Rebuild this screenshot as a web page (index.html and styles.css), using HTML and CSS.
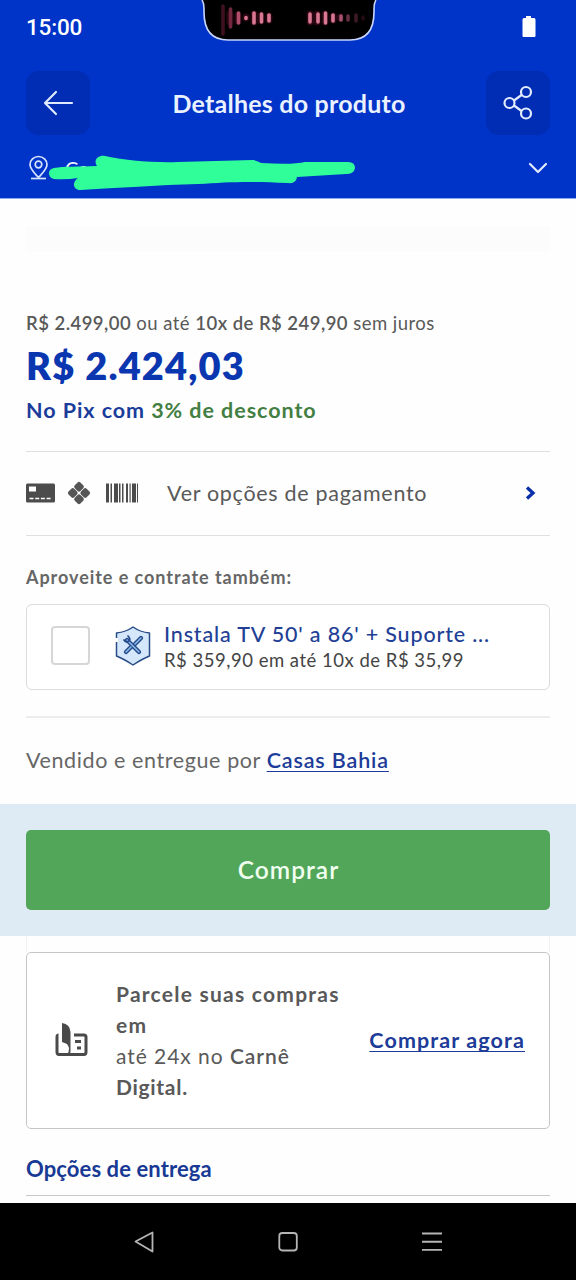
FILE: index.html
```html
<!DOCTYPE html>
<html lang="pt-BR">
<head>
<meta charset="utf-8">
<title>Detalhes do produto</title>
<link rel="stylesheet" href="styles.css">
</head>
<body>
<header class="top">
  <div class="status">
    <span class="clock">15:00</span>
    <svg class="notch" width="176" height="42" viewBox="0 0 176 42">
      <path d="M0 0Q3 2 3 9V12Q3 40 27 40H149Q173 40 173 12V9Q173 2 176 0Z" fill="#000"/>
      <path d="M1 0Q3 3 3 9V12Q3 40 27 40H149Q173 40 173 12V9Q173 3 175 0" fill="none" stroke="#c9d6ff" stroke-width="1.6"/>
      <g stroke-linecap="round" stroke-width="7" stroke="#8d1840" opacity=".3"><path d="M29 14V22M37 15V21M45 17V18M53 14V22M60 15V21M68 16V20M109 14V22M116 14V22M124 14V22M132 16V20M139 17V18"/></g>
      <g stroke-linecap="round" stroke-width="3.6" fill="none">
        <path d="M22 6V34" stroke="#3e1020"/><path d="M29.500 9V27" stroke="#71273e"/><path d="M37.500 13V23" stroke="#b14e6b"/><path d="M45 17.500V18.500M53 13V23M60.500 14V22M68 15V21M109 14V22M117 14V22M124.500 13V23M132 15V21" stroke="#d97893"/><path d="M140 16V20" stroke="#a6526c"/><path d="M147 16V20" stroke="#65303f"/><path d="M155 15V21" stroke="#3d1924"/><path d="M162 17V19" stroke="#230b13"/>
      </g>
    </svg>
    <svg class="battery" width="14" height="22" viewBox="0 0 14 22"><path d="M4 0H9V2H12Q13.500 2 13.500 3.500V20Q13.500 21 12.500 21H1.500Q.5 21 .5 20V3.500Q.5 2 2 2H4Z" fill="#fff"/></svg>
  </div>
  <div class="appbar">
    <div class="icon-btn"><svg width="32" height="28" viewBox="0 0 32 28" fill="none" stroke="#dfeaff" stroke-width="2.200" stroke-linecap="round" stroke-linejoin="round"><path d="M30 14H3M14 3L3 14L14 25"/></svg></div>
    <h1 class="title">Detalhes do produto</h1>
    <div class="icon-btn"><svg width="32" height="36" viewBox="0 0 32 36" fill="none" stroke="#e3ecff" stroke-width="2.200"><circle cx="7.500" cy="18" r="5"/><circle cx="24" cy="7" r="5"/><circle cx="24" cy="28.500" r="5"/><path d="M12 15.500L19.500 10M12 20.500L19.500 26"/></svg></div>
  </div>
  <div class="location">
    <svg width="20" height="26" viewBox="0 0 20 26" fill="none" stroke="#d7e4ff" stroke-width="1.700"><path d="M2 23.500H17"/><path d="M9.500 22.500C5 17.500 1 14 1 9.500A8.500 8 0 0 1 18 9.500C18 14 14 17.500 9.500 22.500Z"/><circle cx="9.500" cy="9.500" r="3.300"/></svg>
    <span class="place">Ca</span>
    <svg class="scribble" width="308" height="40" viewBox="0 0 308 40"><path d="M6 18C16 16 30 17 49 16C45 10 50 5 57 6C75 10 105 13 130 12L205 10Q210 11 213 13Q245 15 257 12L300 12Q307 12 307 18Q306 24 298 24L249 27Q248 34 240 33C200 31 180 32 150 34C110 35 70 38 32 40C26 40 23 33 30 28Q18 30 6 29Q1 28 1 23Q1 19 6 18Z" fill="#30ff99"/></svg>
    <svg class="chevron" width="20" height="12" viewBox="0 0 20 12" fill="none" stroke="#e3ecff" stroke-width="2.200" stroke-linecap="round" stroke-linejoin="round"><path d="M2 2L10 10L18 2"/></svg>
  </div>
</header>
<main>
  <section class="section">
    <div class="placeholder"></div>
    <p class="full-price"><b>R$ 2.499,00</b> ou até <b>10x de R$ 249,90</b> sem juros</p>
    <p class="price">R$ 2.424,03</p>
    <p class="pix">No Pix com <span class="off">3% de desconto</span></p>
    <div class="payment">
      <svg width="29" height="20" viewBox="0 0 29 20"><rect width="29" height="19" y=".5" rx="1.500" fill="#4c4c4c"/><path d="M3 3.500H10V8.500H3Z" fill="#fff"/><path d="M3.500 15.500H26" stroke="#fff" stroke-width="1.400" stroke-dasharray="4 1.700"/></svg>
      <svg class="pix-icon" width="24" height="24" viewBox="0 0 24 24"><g transform="rotate(45 12 12)" fill="#555"><rect x="3.600" y="3.600" width="8" height="8" rx="2"/><rect x="12.400" y="3.600" width="8" height="8" rx="2"/><rect x="3.600" y="12.400" width="8" height="8" rx="2"/><rect x="12.400" y="12.400" width="8" height="8" rx="2"/></g></svg>
      <svg class="bars" width="33" height="20" viewBox="0 0 33 20"><path d="M0 .5H3V19.500H0ZM4.500 .5H6V19.500H4.500ZM8 .5H12V19.500H8ZM13 .5H14.500V19.500H13ZM16 .5H17.500V19.500H16ZM20 .5H22V19.500H20ZM23.500 .5H24.700V19.500H23.500ZM26 .5H30V19.500H26ZM31 .5H32V19.500H31Z" fill="#4c4c4c"/></svg>
      <span class="pay-text">Ver opções de pagamento</span>
      <svg class="go" width="12" height="14" viewBox="0 0 12 14" fill="none" stroke="#0a2fa8" stroke-width="3.300"><path d="M2 1.500L8 7L2 12.500"/></svg>
    </div>
    <p class="also">Aproveite e contrate também:</p>
    <div class="service">
      <span class="check"></span>
      <svg class="shield" width="36" height="42" viewBox="0 0 36 42"><path d="M18 2Q25 7 34.500 8V31Q27 34 18 40Q9 34 1.500 31V8Q11 7 18 2Z" fill="#d5e8fb" stroke="#294c87" stroke-width="1.500" stroke-linejoin="round"/><path d="M1.500 13V17" stroke="#fff" stroke-width="3"/><g fill="none" stroke-linecap="round"><path d="M12 15L24 27M26 13L20 19M16 22L11 27" stroke="#24498b" stroke-width="4.300"/><path d="M12 15L24 27M26 13L20 19M16 22L11 27" stroke="#8bb9e7" stroke-width="1.600"/><path d="M13 11Q16 14 14 16Q11 18 9 15" stroke="#24498b" stroke-width="1.700"/></g></svg>
      <div><p class="service-name">Instala TV 50' a 86' + Suporte ...</p><p class="service-price">R$ 359,90 em até 10x de R$ 35,99</p></div>
    </div>
    <p class="seller"><span>Vendido e entregue por </span><a>Casas Bahia</a></p>
  </section>
  <div class="buy-band"><button class="buy">Comprar</button></div>
  <section class="section">
    <div class="sliver"></div>
    <div class="credit">
      <svg width="33" height="34" viewBox="0 0 33 34"><path d="M3.500 12Q2 12 2 14V29Q2 31.500 4 31.500H29Q31 31.500 31 29V14Q31 12 29 12H19" fill="none" stroke="#4a4a4a" stroke-width="3"/><path d="M7 0Q15 1 15.500 9V29Q15 32 12 32Q16 26 12 21L7 19Z" fill="#4a4a4a"/><path d="M20 18.500H26M22 25H26" stroke="#4a4a4a" stroke-width="3"/></svg>
      <div class="credit-text"><p class="l1">Parcele suas compras</p><p class="l2">em</p><p class="l3">até 24x no <b>Carnê</b></p><p class="l4">Digital.</p></div>
      <a class="buy-now">Comprar agora</a>
    </div>
    <h2 class="delivery">Opções de entrega</h2>
  </section>
</main>
<footer class="nav">
  <svg width="22" height="24" viewBox="0 0 22 24" fill="none" stroke="#b5b5b5" stroke-width="1.800" stroke-linejoin="round"><path d="M2.500 11.500L19.500 2.500V21.500Z"/></svg>
  <svg width="22" height="24" viewBox="0 0 22 24" fill="none" stroke="#b5b5b5" stroke-width="1.800"><rect x="2.300" y="3" width="17.500" height="17.500" rx="3"/></svg>
  <svg width="22" height="24" viewBox="0 0 22 24" stroke="#b5b5b5" stroke-width="1.900"><path d="M1 3.500H21M1 11.700H21M1 19.900H21"/></svg>
</footer>
</body>
</html>
```
FILE: styles.css
```css
* { box-sizing: border-box; }
body { margin: 0; width: 576px; height: 1280px; overflow: hidden; background: #fefefe; color: #595959; font-family: Lato, "Open Sans", sans-serif; }
p, h1, h2 { margin: 0; white-space: nowrap; }
b { font-weight: 600; }
main { height: 1004px; }

.top { height: 199px; background: #0033c7; border-bottom: 1px solid #8eacec; color: #eaf1ff; }
.status { height: 56px; padding: 0 40px 0 26px; display: flex; justify-content: space-between; align-items: flex-start; }
.clock { width: 83px; padding-top: 14px; font: 500 22.5px/27px Roboto, sans-serif; letter-spacing: -0.2px; color: #fff; }
.notch { display: block; margin-left: 92px; margin-right: auto; }
.battery { margin-top: 16px; }
.appbar { height: 94px; padding: 0 26px; display: flex; align-items: center; justify-content: space-between; }
.icon-btn { width: 64px; height: 64px; border-radius: 13px; background: #002db3; display: flex; align-items: center; justify-content: center; }
.title { font-size: 25px; font-weight: 700; line-height: 30px; letter-spacing: .22px; padding-left: 2px; }
.location { height: 36px; padding: 0 28px 0 29px; display: flex; align-items: center; }
.place { width: 28px; margin-left: 16px; font-size: 20px; }
.scribble { margin-left: -53px; margin-top: 4px; height: 40px; position: relative; left: 8px; }
.chevron { margin-left: auto; }

.section { padding: 0 26px; }
.placeholder { height: 26px; margin-bottom: 59px; background: #fcfcfc; }
main > .section:first-child { padding-top: 27px; height: 605px; }
.full-price { font-size: 18.5px; line-height: 24px; letter-spacing: .46px; }
.price { margin-top: 9px; font-size: 38px; line-height: 42px; font-weight: 800; letter-spacing: 1.15px; color: #0a37b0; }
.pix { margin-top: 12px; font-size: 21.500px; line-height: 24px; font-weight: 700; letter-spacing: .95px; color: #1b3c9b; }
.off { color: #437f43; }
.payment { height: 85px; margin-top: 29px; padding-bottom: 1px; border-top: 1px solid #e0e0e0; border-bottom: 1px solid #e0e0e0; display: flex; align-items: center; }
.pix-icon { margin-left: 12px; }
.bars { margin-left: 15px; }
.pay-text { margin-left: 28px; font-size: 21.500px; line-height: 28px; letter-spacing: .7px; white-space: nowrap; }
.go { margin-left: auto; margin-right: 13px; }
.also { margin-top: 29px; font-size: 18px; line-height: 24px; font-weight: 700; letter-spacing: .95px; color: #666; }
.service { height: 86px; margin-top: 15px; border: 1px solid #dcdcdc; border-radius: 6px; display: flex; align-items: center; padding-left: 24px; padding-bottom: 3px; background: #fff; }
.check { width: 39px; height: 39px; border: 2px solid #d6d6d6; border-radius: 4px; }
.shield { margin: 0 13px 0 25px; }
.service-name { font-size: 21.500px; line-height: 28px; font-weight: 500; letter-spacing: .83px; color: #223f96; }
.service-price { font-size: 18.5px; line-height: 24px; letter-spacing: .5px; color: #444; }
.seller { margin-top: 26px; padding-top: 28px; border-top: 2px solid #ededed; font-size: 21.500px; line-height: 28px; letter-spacing: .6px; color: #666; }
.seller a { font-weight: 600; letter-spacing: .85px; }
.seller a, .buy-now { color: #1d3b98; text-decoration: underline; text-decoration-thickness: 1px; text-underline-offset: 3px; text-decoration-skip-ink: none; }
.buy-band { height: 132px; padding: 26px; background: #dfebf4; }
.buy { display: block; width: 100%; height: 80px; padding: 0 0 2px 1px; border: 0; border-radius: 5px; background: #52a659; color: #f1fff1; font: 600 24.500px Lato, sans-serif; letter-spacing: 1px; }
.sliver { height: 16px; border: 1px solid #f1f1f1; border-width: 0 1px; }
.credit { height: 177px; border: 1px solid #c5c5c5; border-radius: 5px; padding: 0 24px 2px 28px; display: flex; align-items: center; background: #fff; }
.credit-text { margin-left: 28px; font-size: 21px; line-height: 31px; }
.l1, .l2, .l4 { font-weight: 700; }
.l1, .l2 { letter-spacing: 1.25px; }
.l3 { letter-spacing: .95px; }
.l4 { letter-spacing: .7px; }
.buy-now { margin-left: auto; font-size: 21.500px; font-weight: 700; letter-spacing: 1.1px; white-space: nowrap; }
.delivery { height: 67px; padding-top: 26px; border-bottom: 1px solid #c8c8c8; font-size: 22px; line-height: 28px; font-weight: 700; letter-spacing: .1px; color: #183994; }
.nav { height: 77px; background: #000; padding: 0 133px; display: flex; align-items: center; justify-content: space-between; }
```
